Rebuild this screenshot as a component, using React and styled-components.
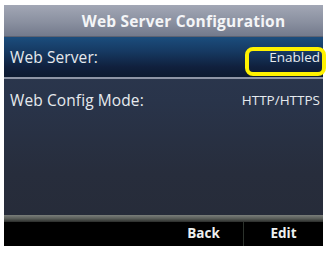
import React from 'react';
import styled, { createGlobalStyle } from 'styled-components';

const GlobalStyle = createGlobalStyle`
  html, body {
    margin: 0;
    padding: 0;
    background: #ffffff;
  }
  body {
    font-family: "Open Sans", "Noto Sans", sans-serif;
  }
`;

const Page = styled.div`
  width: 330px;
  height: 254px;
  padding: 5px 7px 8px 4px;
  box-sizing: border-box;
`;

const Screen = styled.div`
  width: 319px;
  height: 241px;
  display: flex;
  flex-direction: column;
  background: linear-gradient(180deg, #2d3a52 0%, #29344a 40%, #272d3c 70%, #262b38 100%);
`;

const Header = styled.div`
  height: 31px;
  display: flex;
  align-items: center;
  justify-content: center;
  padding-left: 40px;
  background: linear-gradient(180deg, #a2a7b5 0%, #8a90a0 55%, #737a8c 100%);
  border-bottom: 1px solid #5c6272;
  color: #f4f5f7;
  font-weight: 700;
  font-size: 15.5px;
  letter-spacing: 0.2px;
`;

const List = styled.div`
  flex: 1;
  display: flex;
  flex-direction: column;
`;

const Row = styled.div`
  position: relative;
  height: ${p => (p.$selected ? '40px' : '42px')};
  display: flex;
  align-items: center;
  justify-content: space-between;
  padding: 0 3px 0 6px;
  background: ${p =>
    p.$selected
      ? 'linear-gradient(180deg, #1b4d7d 0%, #163a63 35%, #10203d 75%, #0d1a30 100%)'
      : 'transparent'};
  border-bottom: ${p => (p.$selected ? '2px solid #8e95a6' : 'none')};
`;

const Label = styled.span`
  color: #e6eaee;
  font-size: 15.5px;
  letter-spacing: 0.1px;
`;

const Value = styled.span`
  color: #e6eaee;
  font-size: 13.5px;
`;

const Highlight = styled.div`
  position: absolute;
  right: -3px;
  top: 10px;
  width: 73px;
  height: 21px;
  border: 4px solid #fff200;
  border-radius: 8px;
`;

const SoftKeys = styled.div`
  height: 31px;
  display: flex;
  flex-direction: column;
`;

const KeyShade = styled.div`
  height: 7px;
  background: linear-gradient(180deg, #7a7e7a 0%, #5a5e5a 50%, #2a2c2a 100%);
`;

const KeyRow = styled.div`
  flex: 1;
  display: grid;
  grid-template-columns: 80px 80px 79px 80px;
  background: #000;
`;

const Key = styled.div`
  display: flex;
  align-items: center;
  justify-content: center;
  color: #eef0f0;
  font-weight: 700;
  font-size: 13.5px;
  border-left: ${p => (p.$divider ? '1px solid #2c322c' : 'none')};
  padding-bottom: 2px;
`;

export default function App() {
  return (
    <Page>
      <GlobalStyle />
      <Screen>
        <Header>Web Server Configuration</Header>
        <List>
          <Row $selected>
            <Label>Web Server:</Label>
            <Value>Enabled</Value>
            <Highlight />
          </Row>
          <Row>
            <Label>Web Config Mode:</Label>
            <Value>HTTP/HTTPS</Value>
          </Row>
        </List>
        <SoftKeys>
          <KeyShade />
          <KeyRow>
            <Key />
            <Key />
            <Key>Back</Key>
            <Key $divider>Edit</Key>
          </KeyRow>
        </SoftKeys>
      </Screen>
    </Page>
  );
}
